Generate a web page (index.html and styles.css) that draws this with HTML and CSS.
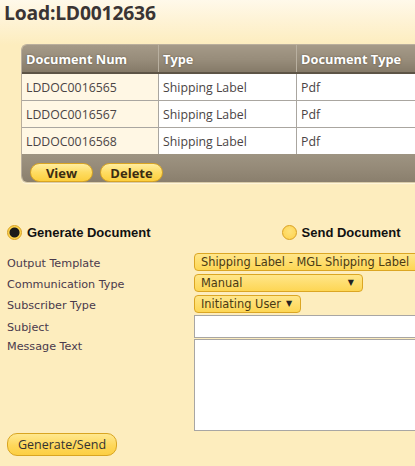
FILE: index.html
```html
<!DOCTYPE html>
<html>
<head>
<meta charset="utf-8">
<link rel="stylesheet" href="styles.css">
</head>
<body>
<div class="page">
  <h1 class="title">Load:LD0012636</h1>
  <div class="panel">
    <table class="grid">
      <thead>
        <tr><th class="c1">Document Num</th><th class="c2">Type</th><th class="c3">Document Type</th></tr>
      </thead>
      <tbody>
        <tr><td class="c1">LDDOC0016565</td><td>Shipping Label</td><td>Pdf</td></tr>
        <tr><td class="c1">LDDOC0016567</td><td>Shipping Label</td><td>Pdf</td></tr>
        <tr><td class="c1">LDDOC0016568</td><td>Shipping Label</td><td>Pdf</td></tr>
      </tbody>
    </table>
    <div class="panel-foot">
      <button class="pill">View</button>
      <button class="pill">Delete</button>
    </div>
  </div>

  <div class="modes">
    <label class="mode"><span class="radio on"></span>Generate Document</label>
    <label class="mode send"><span class="radio"></span>Send Document</label>
  </div>

  <div class="form">
    <div class="lbl">Output Template</div>
    <div class="fld"><div class="sel wide">Shipping Label - MGL Shipping Label</div></div>
    <div class="lbl">Communication Type</div>
    <div class="fld"><div class="sel manual">Manual<span class="arr">▼</span></div></div>
    <div class="lbl">Subscriber Type</div>
    <div class="fld"><div class="sel user last">Initiating User<span class="arr">▼</span></div></div>
    <div class="lbl">Subject</div>
    <div class="fld"><div class="input"></div></div>
    <div class="lbl top">Message Text</div>
    <div class="fld"><div class="textarea"></div></div>
  </div>

  <button class="gen">Generate/Send</button>
</div>
</body>
</html>
```

FILE: styles.css
```css
html, body {
  margin: 0;
  padding: 0;
  width: 415px;
  height: 466px;
  overflow: hidden;
  background: #fdedbe;
}
.page {
  width: 415px;
  height: 466px;
  overflow: hidden;
  background: linear-gradient(to bottom, #fff9ea 0px, #fef3d6 20px, #fdedbe 45px, #fdedbe 100%);
  font-family: "DejaVu Sans", Verdana, sans-serif;
}
.title {
  margin: 0;
  padding: 0 0 0 4px;
  height: 44px;
  line-height: 26px;
  font-family: "Open Sans", "Noto Sans", sans-serif;
  font-weight: 700;
  font-size: 19.3px;
  color: #3a3434;
  letter-spacing: -0.2px;
}
.panel {
  margin-left: 21px;
  width: 440px;
  border-radius: 6px 0 0 6px;
  overflow: hidden;
  box-shadow: 0 1px 0 #d9cba8, 0 2px 1px #fff6dc;
  border-left: 1px solid #b9ae9c;
  border-top: 1px solid #b9ae9c;
}
.grid {
  border-collapse: collapse;
  width: 100%;
  table-layout: fixed;
  font-family: "Open Sans", "Noto Sans", sans-serif;
  font-size: 12.3px;
}
.grid th {
  height: 27px;
  padding: 0 0 0 4px;
  text-align: left;
  color: #fff;
  font-weight: 700;
  font-size: 12.8px;
  text-shadow: 0 0 2px #5a5040;
  background: linear-gradient(to bottom, #a59a88 0%, #978c7a 55%, #857a68 100%);
  border-bottom: 2px solid #5d5446;
  border-left: 1px solid #b9b0a0;
}
.grid th.c1 { border-left: none; }
.grid .c1 { width: 132px; }
.grid .c2 { width: 133px; }
.grid td {
  height: 26px;
  padding: 0 0 0 4px;
  color: #4a4444;
  background: #fff;
  border-bottom: 1px solid #aaa6a0;
  border-left: 1px solid #aaa6a0;
  white-space: nowrap;
}
.grid td.c1 {
  background: #fff7e4;
  border-left: none;
}
.grid tbody tr:last-child td { border-bottom: none; }
.panel-foot {
  height: 28px;
  background: linear-gradient(to bottom, #9e9482 0%, #958a78 50%, #8a7f6d 100%);
  display: flex;
  align-items: flex-end;
  gap: 7px;
  padding: 0 0 0 8px;
  box-sizing: border-box;
}
.pill {
  width: 63px;
  height: 19px;
  padding: 0;
  border: 1px solid #d9a522;
  border-radius: 10px;
  background: linear-gradient(to bottom, #ffeea0 0%, #fedc62 50%, #fccf3e 100%);
  font-family: "Open Sans", "Noto Sans", sans-serif;
  font-weight: 700;
  font-size: 13px;
  color: #3b2c12;
  line-height: 19px;
}
.modes {
  display: flex;
  align-items: center;
  height: 20px;
  margin-top: 40px;
  padding-left: 7px;
  font-family: "Liberation Sans", Arial, sans-serif;
  font-weight: 700;
  font-size: 13px;
  color: #111;
}
.mode {
  display: flex;
  align-items: center;
  gap: 5px;
}
.mode.send { margin-left: 131px; }
.radio {
  display: inline-block;
  width: 13px;
  height: 13px;
  border-radius: 50%;
  border: 1px solid #d9a020;
  background: radial-gradient(circle at 50% 40%, #ffe27a 0%, #fdd14b 100%);
  box-sizing: content-box;
}
.radio.on {
  background: radial-gradient(circle, #1a1a1a 0, #1a1a1a 4.5px, #fdd44e 5.5px, #fdd44e 100%);
}
.form {
  display: grid;
  grid-template-columns: 187px 1fr;
  grid-auto-rows: auto;
  margin-top: 11px;
  padding-left: 7px;
  font-size: 11.2px;
}
.lbl {
  display: flex;
  align-items: center;
  color: #4a3a4c;
  white-space: nowrap;
}
.lbl.top {
  align-items: flex-start;
  padding-top: 1px;
}
.fld {
  display: flex;
  min-width: 0;
}
.sel {
  height: 18px;
  box-sizing: border-box;
  margin-bottom: 3px;
  border: 1px solid #dba624;
  border-radius: 4px;
  background: linear-gradient(to bottom, #ffe68a 0%, #fdd654 100%);
  color: #4a3a14;
  line-height: 16px;
  padding-left: 6px;
  white-space: nowrap;
  display: flex;
  align-items: center;
  font-size: 11.4px;
}
.sel.last { margin-bottom: 2px; }
.sel.wide { width: 240px; flex: none; }
.sel.manual { width: 169px; }
.sel.user { width: 107px; }
.arr {
  margin-left: auto;
  margin-right: 8px;
  font-size: 8px;
  color: #222;
}
.sel.user .arr { margin-left: 5px; }
.input {
  width: 240px;
  flex: none;
  height: 23px;
  box-sizing: border-box;
  background: #fff;
  border: 1px solid #a8a6a4;
  margin-bottom: 1px;
}
.textarea {
  width: 240px;
  flex: none;
  height: 92px;
  box-sizing: border-box;
  background: #fff;
  border: 1px solid #a8a6a4;
}
.gen {
  display: block;
  margin: 2px 0 0 7px;
  width: 110px;
  height: 23px;
  padding: 0;
  border: 1px solid #d9a522;
  border-radius: 10px;
  background: linear-gradient(to bottom, #ffe890 0%, #fed75a 55%, #fccf42 100%);
  font-family: "Open Sans", "Noto Sans", sans-serif;
  font-size: 12.5px;
  color: #333;
}
```
